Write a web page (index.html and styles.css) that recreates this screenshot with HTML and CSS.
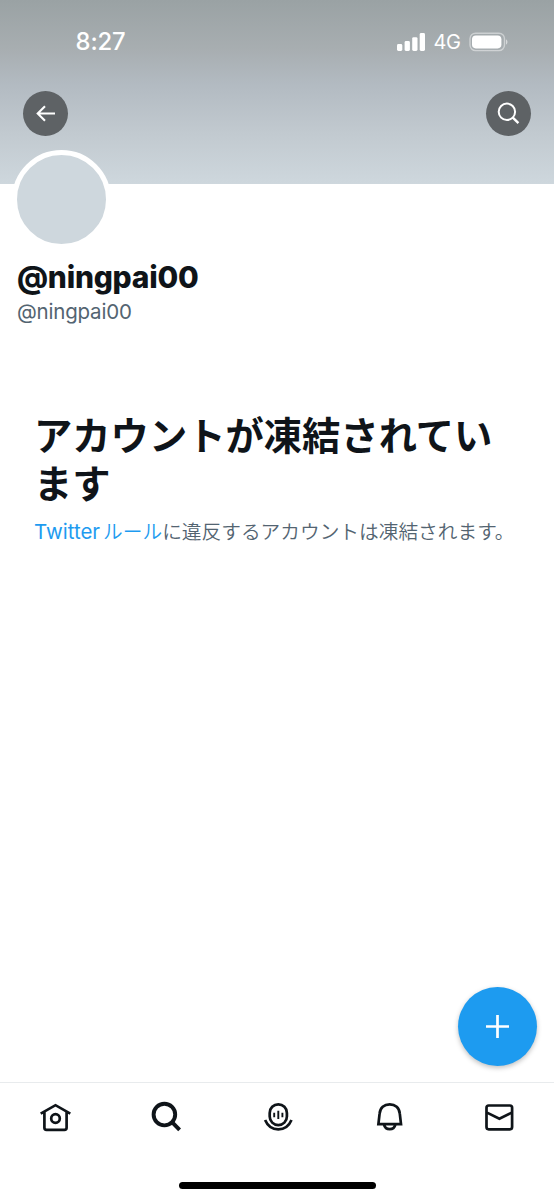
FILE: index.html
```html
<!DOCTYPE html>
<html lang="ja">
<head>
<meta charset="utf-8">
<title>@ningpai00</title>
<link rel="stylesheet" href="styles.css">
</head>
<body>
<div class="screen">
  <header class="banner">
    <div class="status">
      <span class="time">8:27</span>
      <div class="indicators">
        <svg class="signal" width="28" height="18" viewBox="0 0 28 18" fill="#fff"><rect x="0" y="11" width="5.3" height="7" rx="1.4"/><rect x="7.6" y="8" width="5.3" height="10" rx="1.4"/><rect x="15.2" y="4.2" width="5.3" height="13.8" rx="1.4"/><rect x="22.7" y="0" width="5.3" height="18" rx="1.4"/></svg>
        <span class="network">4G</span>
        <svg class="battery" width="40" height="20" viewBox="0 0 40 20"><rect x="1" y="1.2" width="34.5" height="17.4" rx="5.6" fill="none" stroke="#fff" stroke-opacity=".45" stroke-width="1.4"/><rect x="3" y="3.4" width="29.4" height="13" rx="3.8" fill="#fff"/><path d="M37 7.2q3 2.7 0 5.6z" fill="#fff" fill-opacity=".55"/></svg>
      </div>
    </div>
    <div class="actions">
      <button class="round" aria-label="戻る"><svg width="45" height="45" viewBox="0 0 45 45"><path d="M32 22.5H14.5M22 15.2l-7.3 7.3 7.3 7.3" fill="none" stroke="#fff" stroke-width="2.1"/></svg></button>
      <button class="round" aria-label="検索"><svg width="45" height="45" viewBox="0 0 45 45" fill="none" stroke="#fff"><circle cx="20.9" cy="20.8" r="8.2" stroke-width="2"/><path d="M26.6 26.4l5.8 5.8" stroke-width="2.4"/></svg></button>
    </div>
  </header>
  <main class="profile">
    <div class="avatar"></div>
    <h1 class="name">@ningpai00</h1>
    <p class="handle">@ningpai00</p>
    <section class="notice">
      <h2 class="notice-title">アカウントが凍結されています</h2>
      <p class="notice-text"><a class="link"><span class="latin">Twitter</span>ルール</a>に違反するアカウントは凍結されます。</p>
    </section>
  </main>
  <button class="compose" aria-label="作成"><svg width="23" height="23" viewBox="0 0 23 23"><path d="M11.5 0v23M0 11.5h23" stroke="#fff" stroke-width="2.7"/></svg></button>
  <footer class="footer">
    <nav class="tabs">
      <svg class="tab" viewBox="0 0 41 40"><path d="M5.7 16.6L20.5 8.2l14.8 8.4M9.4 15v15.8q0 2.1 2.1 2.1h18q2.1 0 2.1-2.1V15"/><circle cx="20.5" cy="21.5" r="4.3"/></svg>
      <svg class="tab" viewBox="0 0 41 40"><circle cx="18.4" cy="17.6" r="10.8" stroke-width="3.9"/><path d="M26 25.2l7.6 7.6" stroke-width="4"/></svg>
      <svg class="tab" viewBox="0 0 41 40"><rect x="12.7" y="7.3" width="17.2" height="20.8" rx="8.6"/><path d="M8.1 23c2.5 6 7.2 9.3 13.2 9.3s10.7-3.3 13.2-9.3"/><path d="M17.2 15.7v4.5M21.3 13.8v8.2M25.4 15.7v4.5" stroke-width="1.9"/></svg>
      <svg class="tab" viewBox="0 0 41 40"><path d="M10.4 27.2h22.6l-1.2-10.5C31.4 11 27.2 7.3 21.7 7.3S12 11 11.6 16.7zM16 27.6c.8 3.2 2.9 4.6 5.7 4.6s4.9-1.4 5.7-4.6"/></svg>
      <svg class="tab" viewBox="0 0 41 40"><rect x="7.5" y="8.5" width="25.6" height="23.8" rx="2.2"/><path d="M8 15.6l12.4 6.2L32.8 15.6"/></svg>
    </nav>
    <div class="home-indicator"></div>
  </footer>
</div>
</body>
</html>
```
FILE: styles.css
```css
* { box-sizing: border-box; margin: 0; }
body { background: #fff; font-family: Inter, "Noto Sans CJK JP", sans-serif; color: #0f1419; }
button { border: 0; padding: 0; }
svg { display: block; flex: none; }
.screen { position: relative; width: 554px; height: 1200px; display: flex; flex-direction: column; overflow: hidden; }
.banner { height: 184px; flex: none; background: linear-gradient(#9aa2a4 0, #a8aeb1 50px, #b2bac1 83px, #c2cad0 135px, #ced7dd 184px); }
.status { display: flex; justify-content: space-between; align-items: center; height: 83px; padding: 0 45px 0 75.5px; color: #fff; }
.time { font-size: 23.8px; font-weight: 500; letter-spacing: -.1px; }
.indicators { display: flex; align-items: center; }
.network { font-size: 20px; margin: 0 8.5px 0 8.5px; letter-spacing: -.4px; }
.actions { display: flex; justify-content: space-between; padding: 8.4px 23px 0 22.5px; }
.round { width: 45px; height: 45px; border-radius: 50%; background: #5e6265; display: grid; place-items: center; }
.profile { flex: 1; padding: 0 17px; }
.avatar { width: 99px; height: 99px; margin: -34px 0 0 -5px; border-radius: 50%; border: 5px solid #fff; background: #ced7dd; }
.name { margin-top: 9px; font-size: 30px; line-height: 38px; font-weight: 800; letter-spacing: -.25px; }
.handle { margin-top: 3px; font-size: 20.5px; line-height: 26px; color: #536471; letter-spacing: -.2px; }
.notice { margin-top: 87px; padding-left: 17px; }
.notice-title { width: 462px; font-size: 38.3px; line-height: 48px; font-weight: 700; }
.notice-text { margin-top: 10px; font-size: 19.7px; line-height: 28px; color: #536471; font-weight: 350; white-space: nowrap; }
.link { color: #1d9bf0; }
.latin { font-size: 20.5px; font-weight: 400; margin-right: 3px; }
.compose { position: absolute; right: 17px; bottom: 134px; width: 79px; height: 79px; border-radius: 50%; background: #1d9bf0; display: grid; place-items: center; box-shadow: 0 2px 5px rgba(0,0,0,.25); }
.footer { height: 118px; flex: none; border-top: 1px solid #e8ebed; }
.tabs { display: grid; grid-template-columns: repeat(5, 111px); padding-top: 14px; justify-items: center; }
.tab { width: 41px; height: 40px; fill: none; stroke: #0f1419; stroke-width: 2.7; }
.home-indicator { width: 197px; height: 7px; margin: 45px auto 0; border-radius: 4px; background: #000; }
```
